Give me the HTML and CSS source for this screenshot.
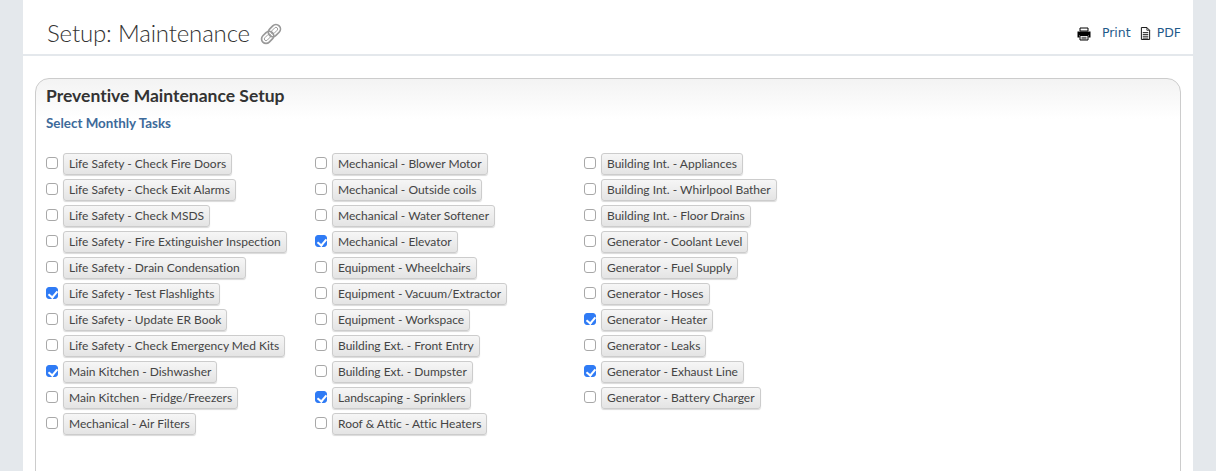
FILE: index.html
```html
<!DOCTYPE html>
<html lang="en">
<head>
<meta charset="utf-8">
<title>Setup: Maintenance</title>
<link rel="stylesheet" href="styles.css">
</head>
<body>
<main class="page">
  <header class="page-head">
    <h1 class="title">Setup: Maintenance
      <svg class="link-icon" viewBox="0 0 22 22" width="22" height="22" fill="none" stroke="#999"><g transform="rotate(-45 11 11)"><rect x="-0.500" y="6.500" width="13.500" height="9" rx="4.500" stroke-width="1.700"/><rect x="2.300" y="9.300" width="8" height="3.400" rx="1.700" stroke-width="0.900"/><rect x="9" y="6.500" width="13.500" height="9" rx="4.500" stroke-width="1.700"/><rect x="11.700" y="9.300" width="8" height="3.400" rx="1.700" stroke-width="0.900"/></g></svg>
    </h1>
    <nav class="tools">
      <svg class="tool-icon print" viewBox="0 0 14 14" width="14" height="14"><path d="M3 1h8v3H3z" fill="#fff" stroke="#000"/><path d="M0.500 4.500h13v6h-2V8h-9v2.500h-2z" fill="#000"/><path d="M3 8.500h8v4.500H3z" fill="#fff" stroke="#000"/><path d="M4.500 10.300h5M4.500 11.800h5" stroke="#000" stroke-width=".7"/></svg>
      <a class="tool-link" href="#">Print</a>
      <svg class="tool-icon doc" viewBox="0 0 12 14" width="11" height="13" fill="none" stroke="#000"><path d="M1.500 0.500h6l3 3v10h-9z"/><path d="M7.500 .5v3h3" stroke-width=".8"/><path d="M3 6h6M3 8h6M3 10h6M3 12h6" stroke-width=".9"/></svg>
      <a class="tool-link" href="#">PDF</a>
    </nav>
  </header>

  <section class="panel">
    <h2 class="panel-title">Preventive Maintenance Setup</h2>
    <h3 class="panel-sub">Select Monthly Tasks</h3>
    <div class="tasks">
      <label class="task"><input type="checkbox"><span class="btn">Life Safety - Check Fire Doors</span></label>
      <label class="task"><input type="checkbox"><span class="btn">Life Safety - Check Exit Alarms</span></label>
      <label class="task"><input type="checkbox"><span class="btn">Life Safety - Check MSDS</span></label>
      <label class="task"><input type="checkbox"><span class="btn">Life Safety - Fire Extinguisher Inspection</span></label>
      <label class="task"><input type="checkbox"><span class="btn">Life Safety - Drain Condensation</span></label>
      <label class="task"><input type="checkbox" checked><span class="btn">Life Safety - Test Flashlights</span></label>
      <label class="task"><input type="checkbox"><span class="btn">Life Safety - Update ER Book</span></label>
      <label class="task"><input type="checkbox"><span class="btn">Life Safety - Check Emergency Med Kits</span></label>
      <label class="task"><input type="checkbox" checked><span class="btn">Main Kitchen - Dishwasher</span></label>
      <label class="task"><input type="checkbox"><span class="btn">Main Kitchen - Fridge/Freezers</span></label>
      <label class="task"><input type="checkbox"><span class="btn">Mechanical - Air Filters</span></label>

      <label class="task"><input type="checkbox"><span class="btn">Mechanical - Blower Motor</span></label>
      <label class="task"><input type="checkbox"><span class="btn">Mechanical - Outside coils</span></label>
      <label class="task"><input type="checkbox"><span class="btn">Mechanical - Water Softener</span></label>
      <label class="task"><input type="checkbox" checked><span class="btn">Mechanical - Elevator</span></label>
      <label class="task"><input type="checkbox"><span class="btn">Equipment - Wheelchairs</span></label>
      <label class="task"><input type="checkbox"><span class="btn">Equipment - Vacuum/Extractor</span></label>
      <label class="task"><input type="checkbox"><span class="btn">Equipment - Workspace</span></label>
      <label class="task"><input type="checkbox"><span class="btn">Building Ext. - Front Entry</span></label>
      <label class="task"><input type="checkbox"><span class="btn">Building Ext. - Dumpster</span></label>
      <label class="task"><input type="checkbox" checked><span class="btn">Landscaping - Sprinklers</span></label>
      <label class="task"><input type="checkbox"><span class="btn">Roof &amp; Attic - Attic Heaters</span></label>

      <label class="task"><input type="checkbox"><span class="btn">Building Int. - Appliances</span></label>
      <label class="task"><input type="checkbox"><span class="btn">Building Int. - Whirlpool Bather</span></label>
      <label class="task"><input type="checkbox"><span class="btn">Building Int. - Floor Drains</span></label>
      <label class="task"><input type="checkbox"><span class="btn">Generator - Coolant Level</span></label>
      <label class="task"><input type="checkbox"><span class="btn">Generator - Fuel Supply</span></label>
      <label class="task"><input type="checkbox"><span class="btn">Generator - Hoses</span></label>
      <label class="task"><input type="checkbox" checked><span class="btn">Generator - Heater</span></label>
      <label class="task"><input type="checkbox"><span class="btn">Generator - Leaks</span></label>
      <label class="task"><input type="checkbox" checked><span class="btn">Generator - Exhaust Line</span></label>
      <label class="task"><input type="checkbox"><span class="btn">Generator - Battery Charger</span></label>
    </div>
  </section>
</main>
</body>
</html>
```
FILE: styles.css
```css
* { box-sizing: border-box; }
html, body { height: 100%; }
body {
  margin: 0;
  background: #e4e8ec;
  font-family: Lato, "Liberation Sans", sans-serif;
  font-variant-ligatures: none;
  color: #333;
  overflow: hidden;
}
.page {
  margin: 0 23px;
  height: 471px;
  background: #fff;
  overflow: hidden;
}
.page-head {
  height: 56px;
  border-bottom: 2px solid #e4e8ec;
  display: flex;
  align-items: flex-start;
  justify-content: space-between;
  padding: 0 12px 0 24px;
}
.title {
  margin: 17px 0 0;
  font-size: 24px;
  line-height: 32px;
  font-weight: 300;
  letter-spacing: -0.16px;
  color: #333;
  display: flex;
  align-items: center;
  gap: 10px;
}
.link-icon { display: block; margin-top: 1px; }
.tools {
  display: flex;
  align-items: center;
  margin-top: 24px;
  height: 16px;
}
.tool-link {
  font-family: "DejaVu Sans", sans-serif;
  font-size: 12.5px;
  color: #1f5a8a;
  text-decoration: none;
}
.tool-icon { display: block; margin-top: 3px; }
.print { margin-right: 11px; }
.doc { margin: 3px 6px 0 9px; }
.panel {
  margin: 22px 12px 0;
  height: 420px;
  border: 1px solid #ccc;
  border-radius: 14px 14px 0 0;
  background: linear-gradient(#f3f3f3 0, #fff 40px);
  padding: 5px 10px 0;
}
.panel-title {
  margin: 0;
  font-size: 17.500px;
  line-height: 24px;
  font-weight: 700;
  color: #333;
}
.panel-sub {
  margin: 6px 0 0;
  font-size: 13.400px;
  line-height: 18px;
  font-weight: 700;
  color: #3d6a9a;
}
.tasks {
  margin-top: 21px;
  display: grid;
  grid-auto-flow: column;
  grid-template-rows: repeat(11, 26px);
  grid-template-columns: repeat(3, 269px);
}
.task {
  display: flex;
  align-items: center;
  gap: 5px;
  height: 22px;
}
.task input {
  appearance: none;
  width: 12px;
  height: 12px;
  margin: -2px 0 0;
  border: 1px solid #a8a8a8;
  border-radius: 3px;
  background: #fff;
  position: relative;
  flex: none;
}
.task input:checked {
  background: #2f7bf5;
  border-color: #2f7bf5;
}
.task input:checked::after {
  content: "";
  position: absolute;
  left: 3px;
  top: 0.500px;
  width: 4px;
  height: 7px;
  border: solid #fff;
  border-width: 0 2px 2px 0;
  transform: rotate(40deg);
}
.btn {
  display: block;
  height: 22px;
  padding: 0 5px;
  font-size: 12px;
  line-height: 20px;
  white-space: nowrap;
  color: #444;
  border: 1px solid #ccc;
  border-radius: 3px;
  background: linear-gradient(#f6f6f6, #e4e4e4);
  box-shadow: 0 1px 1px rgba(0,0,0,.15);
}
```
